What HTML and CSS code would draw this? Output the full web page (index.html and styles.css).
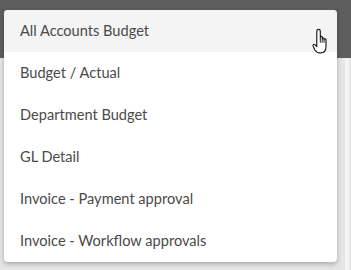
FILE: index.html
```html
<!DOCTYPE html>
<html lang="en">
<head>
    <meta charset="UTF-8">
    <meta name="viewport" content="width=device-width, initial-scale=1.0">
    <title>Reports</title>
    <link rel="stylesheet" href="styles.css">
</head>
<body>
    <div class="topbar"></div>
    <div class="page">
        <div class="scroll-track"></div>
    </div>

    <!-- dropdown menu, open over the page -->
    <ul class="menu">
        <li class="menu-item active">All Accounts Budget</li>
        <li class="menu-item">Budget / Actual</li>
        <li class="menu-item">Department Budget</li>
        <li class="menu-item">GL Detail</li>
        <li class="menu-item">Invoice - Payment approval</li>
        <li class="menu-item">Invoice - Workflow approvals</li>
    </ul>

    <svg class="cursor" width="19" height="26" viewBox="0 0 16 22">
        <path d="M5.5 1.2C6.3 1.2 7 1.9 7 2.7V8.6V7.6C7 6.8 8.6 6.8 8.6 7.6V9.2C8.6 8.4 10.2 8.4 10.2 9.2V9.8C10.2 9 11.8 9 11.8 9.8V15.6C11.8 18.8 10.2 21 7.2 21H6.4C4.4 21 3.3 20 2.3 18.4L0.9 15.2C0.5 14.2 1.6 13.3 2.4 14.1L4 15.8V2.7C4 1.9 4.7 1.2 5.5 1.2Z"
              fill="#fff" stroke="#1d1d22" stroke-width="1" stroke-linejoin="round"/>
        <path d="M7 8.6V12.5M8.6 9.2V12.5M10.2 9.8V12.5" stroke="#1d1d22" stroke-width="0.8" fill="none"/>
    </svg>
</body>
</html>
```

FILE: styles.css
```css
/* page behind the dropdown */
body {
    margin: 0;
    font-family: Lato, "Open Sans", sans-serif;
    background-color: #e6e6e6;
    height: 270px;
    overflow: hidden;
}

.topbar {
    height: 58px;
    background-color: #5e5e5e;
}

.page {
    display: flex;
    justify-content: flex-end;
    height: 212px;
}

.scroll-track {
    width: 4px;
    margin-right: 2px;
    background-color: #f4f4f4;
}

/* dropdown */
.menu {
    position: absolute;
    left: 4px;
    top: 10px;
    width: 333px;
    margin: 0;
    padding: 0;
    list-style: none;
    background-color: #fff;
    border-radius: 4px;
    overflow: hidden;
    box-shadow: 0 2px 5px rgba(0, 0, 0, 0.28);
}

.menu-item {
    height: 42px;
    line-height: 42px;
    padding-left: 16px;
    font-size: 14.6px;
    color: #4a4a4a;
}

.menu-item.active {
    background-color: #f4f4f4;
}

.cursor {
    position: absolute;
    left: 312px;
    top: 28px;
}
```
